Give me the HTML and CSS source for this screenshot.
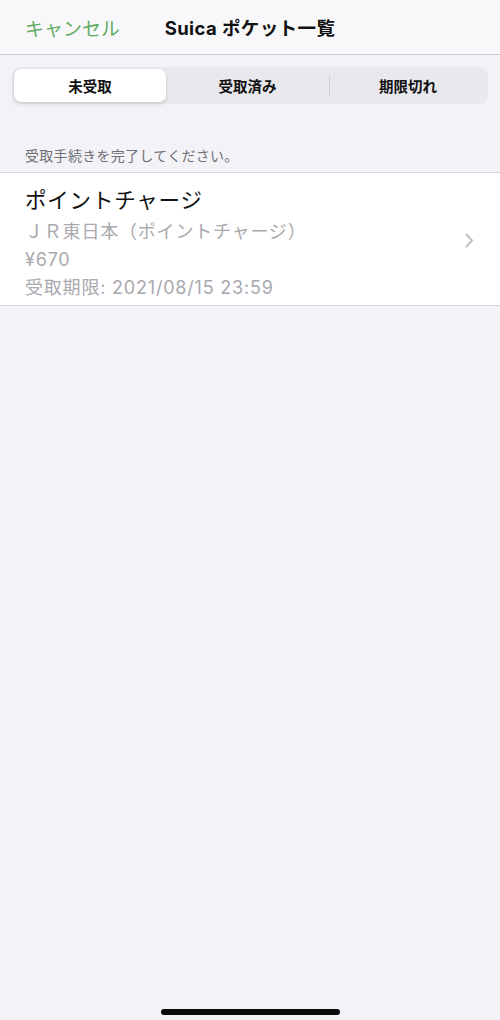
FILE: index.html
```html
<!DOCTYPE html>
<html lang="ja">
<head>
    <meta charset="UTF-8">
    <meta name="viewport" content="width=device-width, initial-scale=1.0">
    <title>Suica ポケット一覧</title>
    <link rel="stylesheet" href="styles.css">
</head>
<body>
    <div class="navbar">
        <span class="cancel">キャンセル</span>
        <span class="nav-title">Suica ポケット一覧</span>
        <span></span>
    </div>

    <div class="segment-wrap">
        <div class="segment">
            <div class="seg-item active">未受取</div>
            <div class="seg-item">受取済み</div>
            <div class="seg-item divided">期限切れ</div>
        </div>
    </div>

    <p class="section-header">受取手続きを完了してください。</p>

    <div class="card">
        <div class="card-body">
            <div class="card-title">ポイントチャージ</div>
            <div class="card-line">ＪＲ東日本（ポイントチャージ）</div>
            <div class="card-line">¥670</div>
            <div class="card-line">受取期限: 2021/08/15 23:59</div>
        </div>
        <svg class="chevron" width="9" height="15" viewBox="0 0 9 15">
            <path d="M1.5 1.5 L7 7.5 L1.5 13.5" fill="none" stroke="#c4c4c7" stroke-width="2.2" stroke-linecap="round" stroke-linejoin="round"/>
        </svg>
    </div>

    <div class="home-indicator"></div>
</body>
</html>
```

FILE: styles.css
```css
body {
    font-family: Inter, "Noto Sans CJK JP", sans-serif;
    display: flex;
    flex-direction: column;
    min-height: 100vh;
    background-color: #f2f2f7;
    margin: 0;
    box-sizing: border-box;
}
.navbar {
    display: grid;
    grid-template-columns: 1fr auto 1fr;
    align-items: center;
    height: 54px;
    padding: 0 25px;
    background: #f8f8fa;
    border-bottom: 1px solid #c9c9cd;
}
.cancel {
    color: #62ab62;
    font-size: 19px;
}
.nav-title {
    font-size: 18.5px;
    font-weight: 700;
    letter-spacing: 0.4px;
    color: #111;
}
.segment-wrap {
    padding: 12px 12px 0;
}
.segment {
    display: grid;
    grid-template-columns: 152px 163px 1fr;
    height: 37px;
    padding: 2px;
    box-sizing: border-box;
    background: #e8e8ed;
    border-radius: 9px;
}
.seg-item {
    display: flex;
    align-items: center;
    justify-content: center;
    font-size: 14.5px;
    font-weight: 700;
    color: #111;
}
.seg-item.active {
    background: white;
    border-radius: 7px;
    box-shadow: 0 2px 4px rgba(0, 0, 0, 0.12), 0 0 1px rgba(0, 0, 0, 0.08);
}
.seg-item.divided {
    border-left: 1px solid #d0d0d4;
    margin: 6px 0;
}
.section-header {
    margin: 43px 25px 7px;
    font-size: 14px;
    line-height: 18px;
    letter-spacing: 0.3px;
    color: #707075;
}
.card {
    display: flex;
    align-items: center;
    background: white;
    border-top: 1px solid #d6d6da;
    border-bottom: 1px solid #d6d6da;
    padding: 11px 26px 3px 25px;
}
.card-body {
    flex: 1;
}
.card-title {
    font-size: 21.5px;
    line-height: 32px;
    letter-spacing: 0.8px;
    margin-bottom: 2px;
    color: #111;
}
.card-line {
    font-size: 18px;
    line-height: 28px;
    letter-spacing: 0.8px;
    color: #a9a9ae;
}
.chevron {
    margin-top: -6px;
}
.home-indicator {
    margin: auto auto 5px;
    width: 179px;
    height: 6px;
    border-radius: 3px;
    background: #0a0a0a;
}
```
